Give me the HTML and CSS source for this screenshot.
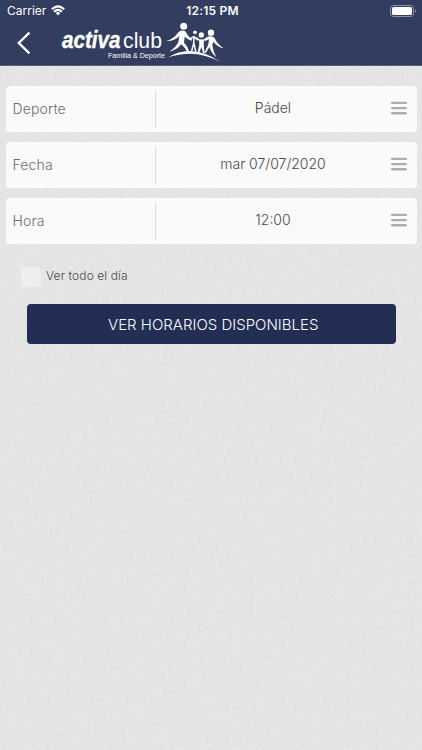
FILE: index.html
```html
<!DOCTYPE html>
<html lang="es">
<head>
<meta charset="utf-8">
<meta name="viewport" content="width=device-width, initial-scale=1">
<title>Activa Club</title>
<link rel="stylesheet" href="styles.css">
</head>
<body>
<svg class="paper" aria-hidden="true">
  <filter id="grain" x="0" y="0" width="100%" height="100%" color-interpolation-filters="sRGB">
    <feTurbulence type="fractalNoise" baseFrequency="0.3" numOctaves="2" seed="4"/>
    <feColorMatrix values="0.04 0 0 0 0.877  0.04 0 0 0 0.877  0.04 0 0 0 0.877  0 0 0 0 1"/>
  </filter>
  <rect width="100%" height="100%" filter="url(#grain)"/>
</svg>
<header class="header">
  <div class="status">
    <div class="carrier"><span>Carrier</span>
      <svg width="14" height="11" viewBox="0 0 14 11" fill="none" stroke="#fff" stroke-width="2"><path d="M.8 4.2Q7-1.5 13.2 4.2M3 6.7Q7 3.1 11 6.7"/><path d="M4.7 8Q7 6.2 9.3 8L7 10.5Z" fill="#fff" stroke="none"/></svg>
    </div>
    <span class="clock">12:15 PM</span>
    <svg class="battery" width="27" height="12" viewBox="0 0 27 12"><rect x=".5" y=".5" width="23" height="11" rx="3" fill="none" stroke="#8d93ab"/><rect x="2" y="2" width="20" height="8" rx="1.6" fill="#fff"/><path d="M25 4Q27 6 25 8Z" fill="#8d93ab"/></svg>
  </div>
  <div class="nav">
    <svg class="back" width="16" height="24" viewBox="0 0 16 24" fill="none" stroke="#fff" stroke-width="2.3"><path d="M13.4 1.6 2.8 12 13.4 22.4"/></svg>
    <svg class="logo" width="164" height="44" viewBox="60 21 164 44" fill="#fff">
      <text class="logo-bold" x="62" y="48.3" textLength="58.5" lengthAdjust="spacingAndGlyphs">activa</text>
      <text class="logo-light" x="123" y="48.3" textLength="39" lengthAdjust="spacingAndGlyphs">club</text>
      <text class="logo-tag" x="108" y="57.9" textLength="57" lengthAdjust="spacingAndGlyphs">Familia &amp; Deporte</text>
      <g transform="translate(155 14) scale(.33333)">
        <circle cx="86" cy="37" r="10.5"/>
        <circle cx="120" cy="55" r="5.5"/>
        <circle cx="139" cy="63" r="8"/>
        <circle cx="168" cy="56" r="9.5"/>
        <path d="M34 81Q56 74 69 56Q78 46 91 52Q97 66 112 77L109 80Q96 75 89 68L87 86Q100 98 103 117L98 118Q92 101 79 91Q66 108 43 113Q64 99 70 84L73 67Q58 82 34 81Z"/>
        <path d="M161 67Q174 65 179 73Q187 91 206 103Q187 99 175 83L172 93Q174 113 184 130Q169 117 163 99L153 116 148 117 160 91 162 76 151 81 150 77Z"/>
        <g fill="none" stroke="#fff" stroke-width="4.5" stroke-linecap="round">
          <path d="M105 74 117 68 127 77M117 68 116 88 110 111M117 88 122 112"/>
          <path d="M125 72 134 79 146 79 157 71"/>
        </g>
        <path d="M132 77 147 77 146 91 149 117 144 117 139 99 133 116 128 116 133 91Z"/>
        <path d="M40 130Q112 86 198 145Q122 102 40 130Z"/>
      </g>
    </svg>
  </div>
</header>
<main class="content">
  <div class="field"><span class="label">Deporte</span><span class="value">Pádel</span><svg class="menu" width="16" height="14" viewBox="0 0 16 14"><path d="M1.2 1.9h13.6M1.2 7.1h13.6M1.2 12.3h13.6"/></svg></div>
  <div class="field"><span class="label">Fecha</span><span class="value">mar 07/07/2020</span><svg class="menu" width="16" height="14" viewBox="0 0 16 14"><path d="M1.2 1.9h13.6M1.2 7.1h13.6M1.2 12.3h13.6"/></svg></div>
  <div class="field"><span class="label">Hora</span><span class="value">12:00</span><svg class="menu" width="16" height="14" viewBox="0 0 16 14"><path d="M1.2 1.9h13.6M1.2 7.1h13.6M1.2 12.3h13.6"/></svg></div>
  <div class="check"><span class="box"></span><span class="check-text">Ver todo el día</span></div>
  <button class="submit">VER HORARIOS DISPONIBLES</button>
</main>
</body>
</html>
```
FILE: styles.css
```css
* { box-sizing: border-box; }
body {
  margin: 0;
  height: 750px;
  overflow: hidden;
  background: #e4e4e4;
  font-family: Inter, "Liberation Sans", sans-serif;
}
.paper {
  position: absolute;
  z-index: -1;
  inset: 0;
  width: 100%;
  height: 100%;
}
.header {
  height: 66px;
  background: #323d60;
  border-bottom: 1px solid #56607d;
  color: #fff;
}
.status {
  display: grid;
  grid-template-columns: 1fr auto 1fr;
  align-items: center;
  height: 21px;
  padding: 0 5px 0 7px;
  font-size: 12px;
}
.carrier { display: flex; align-items: center; gap: 5px; }
.clock { font-weight: 600; letter-spacing: .2px; padding-left: 1px; }
.battery { justify-self: end; }
.nav { display: flex; height: 44px; }
.back { margin: 10px 0 0 16px; }
.logo { margin-left: 28px; }
.logo-bold { font: italic bold 23.5px "Liberation Sans", sans-serif; stroke: #fff; stroke-width: .4px; }
.logo-light { font: 22.5px "Liberation Sans", sans-serif; }
.logo-tag { font: 7.2px "Liberation Sans", sans-serif; }
.content { padding: 20px 5.5px 0; }
.field {
  display: flex;
  align-items: center;
  height: 45.5px;
  margin-bottom: 10.5px;
  border-radius: 4px;
  background: #fafafa;
  font-size: 14px;
  font-weight: 300;
}
.label {
  width: 150.5px;
  height: 38px;
  padding-left: 7px;
  border-right: 1px solid #dcdcdc;
  line-height: 38px;
  color: #6c6c6c;
  letter-spacing: .15px;
}
.value {
  width: 233px;
  padding: 0 0 3px 1px;
  text-align: center;
  color: #484848;
}
.menu {
  margin: 0 0 1px 1.5px;
  fill: none;
  stroke: #adadad;
  stroke-width: 2.4;
  stroke-linecap: round;
}
.check { display: flex; align-items: center; height: 20px; margin: 23px 0 0 15.5px; }
.box { width: 20px; height: 20px; border-radius: 3px; background: #eee; }
.check-text {
  margin-left: 5px;
  padding-bottom: 3px;
  font-size: 12px;
  font-weight: 300;
  color: #484848;
  letter-spacing: .1px;
}
.submit {
  display: block;
  width: 369.5px;
  height: 40.5px;
  margin: 17px 0 0 21px;
  padding: 1px 0 0 4px;
  border: 0;
  border-radius: 4px;
  background: #222e54;
  color: #fff;
  font: 300 15px Inter, "Liberation Sans", sans-serif;
}
```
